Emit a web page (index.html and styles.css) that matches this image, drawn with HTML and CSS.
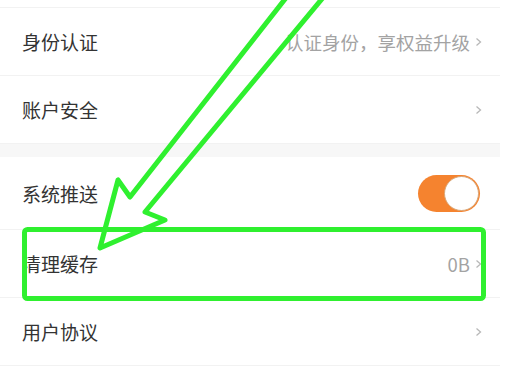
FILE: index.html
```html
<!DOCTYPE html>
<html>
<head>
    <meta charset="utf-8">
    <title>设置</title>
    <link rel="stylesheet" href="styles.css">
</head>
<body>
    <div class="settings">
        <div class="group first">
            <div class="row">
                <span class="label">身份认证</span>
                <span class="value">认证身份，享权益升级</span>
                <svg class="chevron" viewBox="0 0 7 10"><path d="M1.5 1.5 L5.5 5 L1.5 8.5"/></svg>
            </div>
            <div class="row">
                <span class="label">账户安全</span>
                <svg class="chevron" viewBox="0 0 7 10"><path d="M1.5 1.5 L5.5 5 L1.5 8.5"/></svg>
            </div>
        </div>

        <div class="spacer"></div>

        <div class="group">
            <div class="row row-switch">
                <span class="label">系统推送</span>
                <div class="switch on"><div class="knob"></div></div>
            </div>
            <div class="row">
                <span class="label">清理缓存</span>
                <span class="value">0B</span>
                <svg class="chevron" viewBox="0 0 7 10"><path d="M1.5 1.5 L5.5 5 L1.5 8.5"/></svg>
            </div>
            <div class="row">
                <span class="label">用户协议</span>
                <svg class="chevron" viewBox="0 0 7 10"><path d="M1.5 1.5 L5.5 5 L1.5 8.5"/></svg>
            </div>
        </div>
    </div>

    <!-- hand-drawn annotation on top of the screenshot -->
    <svg class="annotation" viewBox="0 0 506 372">
        <path d="M289 -6 L130 197 L118 180 L100 248 L165 220 L145 212 L326 -6"/>
        <rect x="24.5" y="229.5" width="459" height="69" rx="3"/>
    </svg>
</body>
</html>
```

FILE: styles.css
```css
* {
    margin: 0;
    padding: 0;
    box-sizing: border-box;
}

body {
    font-family: 'Noto Sans CJK SC', 'Noto Sans', sans-serif;
    background: #ffffff;
    color: #333333;
    width: 506px;
    height: 372px;
    overflow: hidden;
    position: relative;
}

.settings {
    width: 500px;
    padding-top: 7px;
}

.group.first {
    border-top: 1px solid #f2f2f2;
}

.row {
    display: flex;
    align-items: center;
    height: 68px;
    padding: 0 18px 0 22px;
    border-bottom: 1px solid #f2f2f2;
}

.row-switch {
    height: 73px;
}

.label {
    font-size: 19px;
    color: #333333;
    flex: 1;
}

.value {
    font-size: 18.5px;
    color: #a3a3a3;
    margin-right: 5px;
}

.chevron {
    width: 7px;
    height: 10px;
    fill: none;
    stroke: #b8b8b8;
    stroke-width: 1.3;
}

.spacer {
    height: 13px;
    background: #f7f7f7;
}

.switch {
    width: 62px;
    height: 37px;
    border-radius: 19px;
    background: #e5e5e5;
    position: relative;
    margin-right: 2px;
}

.switch.on {
    background: #f5832f;
}

.switch .knob {
    position: absolute;
    top: 1px;
    right: 1px;
    width: 35px;
    height: 35px;
    border-radius: 50%;
    background: #ffffff;
    border: 1px solid #d9a676;
}

.annotation {
    position: absolute;
    top: 0;
    left: 0;
    width: 506px;
    height: 372px;
    pointer-events: none;
    fill: none;
    stroke: #2ff02f;
    stroke-width: 5;
    stroke-linejoin: round;
    stroke-linecap: round;
}
```
